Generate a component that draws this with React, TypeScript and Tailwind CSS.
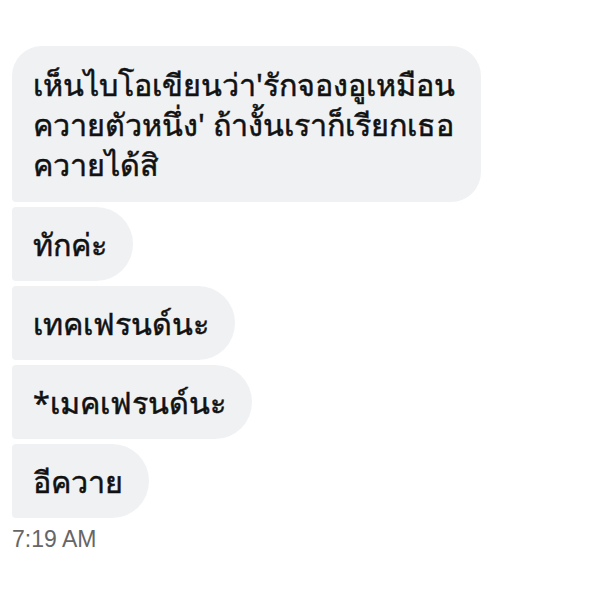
import React from "react";

const bubbles = [
  { text: "เห็นไบโอเขียนว่า'รักจองอูเหมือน\nควายตัวหนึ่ง' ถ้างั้นเราก็เรียกเธอ\nควายได้สิ", first: true },
  { text: "ทักค่ะ" },
  { text: "เทคเฟรนด์นะ" },
  { text: "*เมคเฟรนด์นะ" },
  { text: "อีควาย" },
];

export default function App() {
  return (
    <div className="w-[598px] h-[598px] bg-white flex flex-col items-start pt-[46px] pl-[12px] gap-[5px] font-['Noto_Sans','DejaVu_Sans',sans-serif]">
      {bubbles.map((b, i) => (
        <div
          key={i}
          className={
            b.first
              ? "bg-[#eff1f3] text-[#111] text-[30.5px] font-normal [-webkit-text-stroke:0.5px_#111] leading-[40px] pl-[21px] pr-[26px] py-[18px] rounded-tl-[30px] rounded-tr-[30px] rounded-br-[30px] rounded-bl-[4px] whitespace-pre"
              : "bg-[#eff1f3] text-[#111] text-[30.5px] font-normal [-webkit-text-stroke:0.5px_#111] leading-[40px] pl-[21px] pr-[26px] py-[17px] rounded-r-[38px] rounded-l-[4px] whitespace-pre"
          }
        >
          {b.text}
        </div>
      ))}
      <div className="mt-[2px] text-[23px] leading-[28px] text-[#666666] font-['Liberation_Sans',Arial,sans-serif]">
        7:19 AM
      </div>
    </div>
  );
}
